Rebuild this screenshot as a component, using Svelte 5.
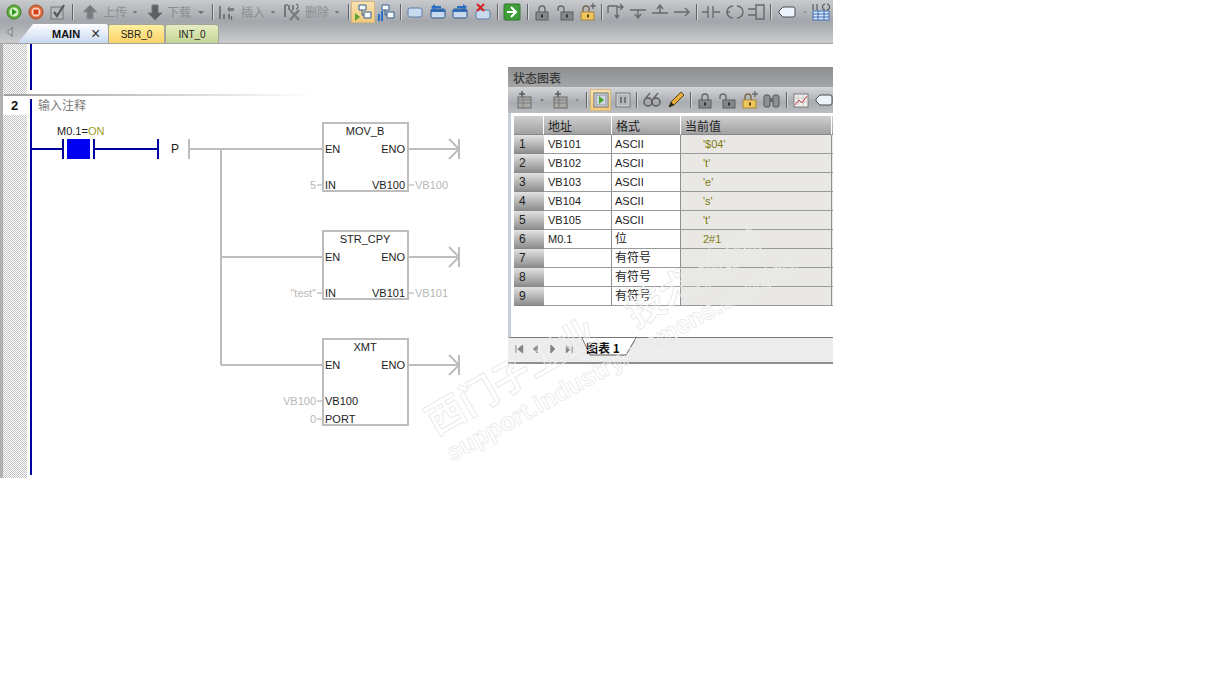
<script>
  const mainBar = [
    { w: 3 }, { i: 'play', w: 22 }, { i: 'stop', w: 22 }, { i: 'check', w: 22 }, { sep: 1, w: 6 }, { w: 2 },
    { i: 'up', w: 26 }, { t: '上传', w: 24 }, { i: 'drop', w: 16 }, { i: 'down', w: 24 }, { t: '下载', w: 24 }, { i: 'drop', w: 20 }, { sep: 1, w: 2 },
    { i: 'ins', w: 28 }, { t: '插入', w: 24 }, { i: 'drop', w: 16 }, { i: 'del', w: 24 }, { t: '删除', w: 24 }, { i: 'drop', w: 16 }, { sep: 1, w: 6 },
    { i: 'net', w: 24, on: 1 }, { i: 'net2', w: 22 }, { sep: 1, w: 6 },
    { i: 'bm', w: 24 }, { i: 'left', w: 22 }, { i: 'right', w: 22 }, { i: 'xbm', w: 22 }, { sep: 1, w: 8 },
    { i: 'go', w: 22 }, { sep: 1, w: 8 },
    { i: 'lock', w: 22 }, { i: 'unlock', w: 23 }, { i: 'lockadd', w: 23 }, { sep: 1, w: 5 },
    { i: 'br1', w: 22 }, { i: 'br2', w: 23 }, { i: 'br3', w: 22 }, { i: 'br4', w: 21 }, { sep: 1, w: 8 },
    { i: 'nc', w: 22 }, { i: 'coil', w: 25 }, { i: 'box', w: 20 }, { sep: 1, w: 7 },
    { i: 'tag', w: 26 }, { i: 'drop', w: 10 }, { i: 'tbl', w: 22 }
  ];
  const winBar = [
    { w: 5 }, { i: 'ins2', w: 22 }, { i: 'drop', w: 14 }, { i: 'ins3', w: 22 }, { i: 'drop', w: 12 }, { sep: 1, w: 7 },
    { i: 'run', w: 21, on: 1 }, { i: 'pause', w: 23 }, { sep: 1, w: 4 }, { i: 'glass', w: 28 }, { i: 'pencil', w: 20 }, { sep: 1, w: 8 },
    { i: 'lock', w: 21 }, { i: 'unlock', w: 23 }, { i: 'lockadd', w: 23 }, { i: 'bino', w: 21 }, { sep: 1, w: 8 }, { i: 'chart', w: 21 }, { i: 'tag', w: 26 }
  ];
  const rows = [
    ['1', 'VB101', 'ASCII', "'$04'"], ['2', 'VB102', 'ASCII', "'t'"], ['3', 'VB103', 'ASCII', "'e'"],
    ['4', 'VB104', 'ASCII', "'s'"], ['5', 'VB105', 'ASCII', "'t'"], ['6', 'M0.1', '位', '2#1'],
    ['7', '', '有符号', ''], ['8', '', '有符号', ''], ['9', '', '有符号', '']
  ];
  const blocks = [
    { y: 123, h: 68, title: 'MOV_B', pins: [{ name: 'IN', val: '5', dy: 62 }], out: 'VB100' },
    { y: 231, h: 68, title: 'STR_CPY', pins: [{ name: 'IN', val: '"test"', dy: 62 }], out: 'VB101' },
    { y: 339, h: 86, title: 'XMT', pins: [{ name: 'VB100', val: 'VB100', dy: 62 }, { name: 'PORT', val: '0', dy: 80 }] }
  ];
</script>

{#snippet icon(n)}
  <svg width="20" height="20" viewBox="0 0 20 20">
    {#if n === 'play'}
      <circle cx="10" cy="10" r="7" fill="#5fae3c" stroke="#3f7f2c" /><circle cx="10" cy="10" r="4.5" fill="#d8f0c8" /><path d="M8 6.5l5 3.5-5 3.5z" fill="#2f9a2a" />
    {:else if n === 'stop'}
      <circle cx="10" cy="10" r="7" fill="#dd6a3a" stroke="#a94a2a" /><circle cx="10" cy="10" r="4.5" fill="#f6d8c8" /><rect x="7.5" y="7.5" width="5" height="5" fill="#d8401c" />
    {:else if n === 'check'}
      <rect x="3" y="5" width="12" height="12" fill="#b6b8ba" stroke="#73767a" /><path d="M6 10l3 4 7-11" fill="none" stroke="#55585c" stroke-width="2.2" />
    {:else if n === 'up'}
      <path d="M10 3l7 7h-4v7H7v-7H3z" fill="#777b7f" stroke="#8d9094" />
    {:else if n === 'down'}
      <path d="M10 18l7-7h-4V3H7v8H3z" fill="#5c6064" stroke="#777" />
    {:else if n === 'drop'}
      <path d="M7 9h6l-3 3z" fill="#6d7074" />
    {:else if n === 'ins'}
      <path d="M3 4v13M7 12v5M12 12v5" stroke="#4a4d50" stroke-width="1.2" fill="none" /><path d="M10 7l3-3v2h4v3h-4v2z" fill="#7a7d81" /><path d="M14 14a2 2.5 0 0 1 0 4" stroke="#555" fill="none" />
    {:else if n === 'del'}
      <path d="M2 3v12M2 3h3M6 3v5M10 3v5" stroke="#4a4d50" stroke-width="1.2" fill="none" /><path d="M7 8l9 10M16 8l-9 10" stroke="#777b7f" stroke-width="2.4" /><path d="M13 2a2 2.5 0 0 1 0 5" stroke="#555" fill="none" />
    {:else if n === 'net' || n === 'net2'}
      <path d="M6 3h7v5H6zM11 10h7v6h-7z" fill="#f4f7fb" stroke="#36608f" /><path d="M9 8v5h2" fill="none" stroke="#36608f" />
      {#if n === 'net'}<path d="M2 11l5 4-5 4z" fill="#5aa62f" />{:else}<path d="M2 12h2v7H2zM5 9h2v10H5z" fill="#2a6fc4" />{/if}
    {:else if n === 'bm'}
      <rect x="3" y="6" width="14" height="9" rx="2" fill="#c9d9ee" stroke="#5b7fa8" />
    {:else if n === 'left' || n === 'right'}
      <rect x="3" y="7" width="14" height="9" rx="1.5" fill="#c9d9ee" stroke="#27548c" /><rect x="3" y="7" width="14" height="3" fill="#2f6cb3" />
      {#if n === 'left'}<path d="M3 5l4-3v2h6v2H7v2z" fill="#2a6fc4" />{:else}<path d="M17 5l-4-3v2H7v2h6v2z" fill="#2a6fc4" />{/if}
    {:else if n === 'xbm'}
      <rect x="4" y="8" width="14" height="9" rx="2" fill="#c9d9ee" stroke="#5b7fa8" /><path d="M5 2l7 7M12 2L5 9" stroke="#d92020" stroke-width="2" />
    {:else if n === 'go'}
      <rect x="2" y="2" width="16" height="16" rx="1" fill="#3f9e3a" stroke="#2f7a2c" /><path d="M5 10h7M9 5l5 5-5 5" fill="none" stroke="#fff" stroke-width="2" />
    {:else if n === 'lock'}
      <path d="M7 10V7a3 3 0 0 1 6 0v3" fill="none" stroke="#66696c" stroke-width="1.4" /><rect x="4" y="10" width="12" height="8" fill="#85878a" stroke="#5d6063" /><rect x="9" y="12.5" width="2" height="3" fill="#333" />
    {:else if n === 'unlock'}
      <path d="M3 9V7a3 3 0 0 1 6 0v3" fill="none" stroke="#66696c" stroke-width="1.4" /><rect x="6" y="10" width="12" height="8" fill="#85878a" stroke="#5d6063" /><rect x="11" y="12.5" width="2" height="3" fill="#333" />
    {:else if n === 'lockadd'}
      <path d="M5 10V7a3 3 0 0 1 6 0v3" fill="none" stroke="#77654a" stroke-width="1.4" /><rect x="3" y="10" width="13" height="8" fill="#eec65c" stroke="#a8853c" /><rect x="9" y="12.5" width="2" height="3" fill="#5a4410" /><path d="M15 1v6M12 4h6" stroke="#4a4d50" />
    {:else if n === 'br1'}
      <path d="M3 4h9v12M3 4v7M12 5h6M15 2l3 3-3 3M10 13l2 3 2-3" fill="none" stroke="#66696d" stroke-width="1.4" />
    {:else if n === 'br2'}
      <path d="M2 8h16M10 8v6M7 12l3 4 3-4" fill="none" stroke="#66696d" stroke-width="1.4" />
    {:else if n === 'br3'}
      <path d="M2 11h16M10 11V5M7 7l3-4 3 4" fill="none" stroke="#66696d" stroke-width="1.4" />
    {:else if n === 'br4'}
      <path d="M2 10h15M13 6l4 4-4 4" fill="none" stroke="#66696d" stroke-width="1.4" />
    {:else if n === 'nc'}
      <path d="M1 10h6M13 10h6M7 4v12M12 4v12" fill="none" stroke="#66696d" stroke-width="1.4" />
    {:else if n === 'coil'}
      <path d="M1 10h4M8 4a6 6 0 0 0 0 12M12 4a6 6 0 0 1 0 12" fill="none" stroke="#66696d" stroke-width="1.4" />
    {:else if n === 'box'}
      <path d="M1 7h8M1 13h8M9 3h8v14H9z" fill="none" stroke="#66696d" stroke-width="1.4" />
    {:else if n === 'tag'}
      <path d="M6 5h10a2 2 0 0 1 2 2v6a2 2 0 0 1-2 2H6l-4-4V9z" fill="#eef4fb" stroke="#4b4f53" />
    {:else if n === 'tbl'}
      <path d="M2 2v6M6 2v6M14 2a2.5 3 0 0 0 0 6M16 2a2.5 3 0 0 1 0 6" stroke="#444" fill="none" /><rect x="2" y="9" width="16" height="9" fill="#dbe7f8" stroke="#3f6fb6" /><path d="M2 12h16M2 15h16M7 9v9M13 9v9" stroke="#3f6fb6" />
    {:else if n === 'ins2' || n === 'ins3'}
      <rect x="4" y="7" width="13" height="11" fill="#a9aaa4" stroke="#6a6d6f" /><path d="M4 10h13M4 13h13M9 7v11" stroke="#7a7d7f" /><path d="M8 1v6M5 4h6" stroke="#5a5d5f" stroke-width="1.6" />
    {:else if n === 'run'}
      <rect x="3" y="3" width="14" height="14" fill="#e8e9ea" stroke="#66696d" /><rect x="5" y="5" width="10" height="10" fill="#cfd9e4" stroke="#8b9099" /><path d="M8 6l5 4-5 4z" fill="#4ba32e" />
    {:else if n === 'pause'}
      <rect x="3" y="3" width="14" height="14" fill="#c9cacb" stroke="#77797c" /><rect x="5" y="5" width="10" height="10" fill="#b4b5b7" /><path d="M8 7v6M12 7v6" stroke="#66696d" stroke-width="1.6" />
    {:else if n === 'glass'}
      <circle cx="6" cy="12" r="4" fill="#aaa" stroke="#55585a" stroke-width="1.4" /><circle cx="14" cy="12" r="4" fill="#aaa" stroke="#55585a" stroke-width="1.4" /><path d="M3 9L8 3M11 9l5-6" stroke="#66696d" stroke-width="1.4" />
    {:else if n === 'pencil'}
      <path d="M3 17l2-5L15 2l3 3L8 15z" fill="#e7ac3a" stroke="#5c4a1f" /><path d="M3 17l2-5 3 3z" fill="#222" />
    {:else if n === 'bino'}
      <rect x="2" y="5" width="6" height="12" rx="2" fill="#8c8e90" stroke="#55585a" /><rect x="11" y="5" width="6" height="12" rx="2" fill="#8c8e90" stroke="#55585a" /><rect x="8" y="8" width="3" height="4" fill="#666" />
    {:else if n === 'chart'}
      <rect x="3" y="4" width="14" height="13" fill="#f4f0ee" stroke="#77797c" /><path d="M3 8h14M3 12h14M7 4v13M12 4v13" stroke="#c8c8c8" /><path d="M4 15l4-5 3 3 5-7" fill="none" stroke="#c8404a" />
    {/if}
  </svg>
{/snippet}

{#snippet bar(items)}
  {#each items as it}
    {#if it.sep}
      <span class="sepwrap" style="width:{it.w}px"><span class="sep"></span></span>
    {:else if it.t}
      <span class="lbl" style="width:{it.w}px">{it.t}</span>
    {:else}
      <span class="btn" class:on={it.on} style="width:{it.w}px">{#if it.i}{@render icon(it.i)}{/if}</span>
    {/if}
  {/each}
{/snippet}

<div class="app">
  <div class="chrome">
    <div class="toolbar">{@render bar(mainBar)}</div>
    <div class="tabs">
      <svg class="scroll" width="10" height="12" viewBox="0 0 10 12"><path d="M7 1.5L2.5 6 7 10.5z" fill="#c9cbce" stroke="#6f7276" /></svg>
      <div class="tab main"><b>MAIN</b><span class="x">×</span></div>
      <div class="tab sbr">SBR_0</div>
      <div class="tab int">INT_0</div>
    </div>
  </div>

  <div class="editor">
    <svg class="ladder" width="833" height="434" viewBox="0 44 833 434">
      <defs>
        <pattern id="hatch" width="2" height="2" patternUnits="userSpaceOnUse">
          <rect width="2" height="2" fill="#fff" /><rect width="1" height="1" fill="#c4c4c4" /><rect x="1" y="1" width="1" height="1" fill="#c4c4c4" />
        </pattern>
        <linearGradient id="fade"><stop offset="0" stop-color="#a0a0a0" /><stop offset="1" stop-color="#fff" /></linearGradient>
      </defs>
      <rect x="3" y="44" width="24" height="434" fill="url(#hatch)" />
      <rect x="0" y="44" width="3" height="434" fill="#b0b0b0" />
      <rect x="4" y="94" width="310" height="2" fill="url(#fade)" />
      <rect x="3" y="96" width="24" height="19" fill="#fff" />
      <text x="11" y="110" class="num">2</text>
      <text x="38" y="110" class="cmt">输入注释</text>
      <rect x="30" y="44" width="2" height="46" fill="#00009c" />
      <rect x="30" y="99" width="2" height="376" fill="#00009c" />

      <text x="57" y="135" class="t">M0.1=<tspan class="on">ON</tspan></text>
      <path d="M32 149H62M94 149H158" class="bw" />
      <path d="M63 139v20M94 139v20M158 139v20" class="bw" />
      <rect x="67" y="139" width="23" height="20" fill="#0000f0" />
      <text x="171" y="153" class="t big">P</text>
      <path d="M189 139v20M190 149H322M221 149V365M221 257H322M221 365H322" class="gw" />

      {#each blocks as b}
        <rect x="323" y={b.y} width="85" height={b.h} class="blk" />
        <text x="365" y={b.y + 12} class="t mid">{b.title}</text>
        <text x="325" y={b.y + 30} class="t">EN</text>
        <text x="405" y={b.y + 30} class="t end">ENO</text>
        <path d="M409 {b.y + 26}H459M459 {b.y + 16}v20M449 {b.y + 16}l10 10-10 10" class="gw" />
        {#each b.pins as p}
          <text x="325" y={b.y + p.dy + 4} class="t">{p.name}</text>
          <text x="316" y={b.y + p.dy + 4} class="t dim end">{p.val}</text>
          <path d="M317 {b.y + p.dy}H322" class="stub" />
        {/each}
        {#if b.out}
          <text x="405" y={b.y + 66} class="t end">{b.out}</text>
          <path d="M409 {b.y + 62}H414" class="stub" />
          <text x="415" y={b.y + 66} class="t dim">{b.out}</text>
        {/if}
      {/each}
    </svg>

    <section class="win">
      <header>状态图表</header>
      <div class="winbar">{@render bar(winBar)}</div>
      <div class="body">
        <div class="grid">
          <div class="hd"></div><div class="hd">地址</div><div class="hd">格式</div><div class="hd">当前值</div><div class="hd"></div>
          {#each rows as r, i}
            <div class="rn">{r[0]}</div><div class="c">{r[1]}</div><div class="c fmt" class:cjk={i >= 5}>{r[2]}</div><div class="c val">{r[3]}</div><div class="c val"></div>
          {/each}
        </div>
      </div>
      <div class="sheet">
        <span class="nav">
          <svg width="66" height="10" viewBox="0 0 66 10">
            <path d="M2 1v8M9 1L4 5l5 4zM24 1l-4 4 4 4zM38 1l4 4-4 4zM54 1l4 4-4 4zM60 1v8" fill="#7f8285" stroke="#7f8285" />
          </svg>
        </span>
        <span class="sheettab">
          <svg class="tabedge" width="58" height="20" viewBox="0 0 58 20"><path d="M0 0L8 17H44L54 0" fill="#fff" stroke="#555" /></svg>
          <span class="tabtxt">图表 1</span>
        </span>
      </div>
    </section>

    <svg class="mark" width="833" height="434" viewBox="0 44 833 434">
      <text transform="translate(436 436) rotate(-30)" class="wm1">西门子工业</text>
      <text transform="translate(636 328) rotate(-30)" class="wm1">技术论坛</text>
      <text transform="translate(452 462) rotate(-29)" class="wm2">support.industry.siemens.com/cs</text>
    </svg>
  </div>
</div>

<style>
  :global(body) { margin: 0; background: #fff; }
  .app { width: 833px; font: 11px "Liberation Sans", "Noto Sans CJK SC", sans-serif; color: #222; }
  .chrome { height: 44px; background: linear-gradient(#c8cacc 0, #a3a7ac 21px, #a9adb1 26px, #c9cacc 42px); border-bottom: 1px solid #a2a2a2; box-sizing: border-box; }
  .toolbar { height: 23px; display: flex; align-items: center; overflow: hidden; }
  .btn { display: flex; justify-content: center; align-items: center; height: 22px; flex: none; }
  .btn.on { background: linear-gradient(#f7e3b4, #f2c878); outline: 1px solid #d8b77a; outline-offset: -1px; }
  .sepwrap { display: flex; justify-content: center; flex: none; }
  .sep { width: 1px; height: 16px; flex: none; background: #5f6367; box-shadow: 1px 0 #d8d8d8; }
  .lbl { flex: none; font-size: 12px; color: #8b8e91; white-space: nowrap; }
  .tabs { height: 20px; display: flex; align-items: flex-end; position: relative; }
  .scroll { margin: 0 0 5px 5px; flex: none; }
  .tab { height: 19px; display: flex; align-items: center; justify-content: center; box-sizing: border-box; font-size: 10px; color: #222; border: 1px solid #a5a69a; border-bottom: none; flex: none; border-radius: 3px 3px 0 0; }
  .main { width: 90px; margin-left: 3px; padding-left: 34px; justify-content: flex-start; gap: 11px; border: none; background: linear-gradient(#fdfeff, #c9d9f0); clip-path: polygon(15px 0, 100% 0, 100% 100%, 0 100%); font-size: 11px; color: #111; }
  .x { font-size: 16px; color: #333; line-height: 1; }
  .sbr { width: 57px; background: linear-gradient(#fff0a0, #fbd268); }
  .int { width: 54px; background: linear-gradient(#e6edc0, #c3d596); }

  .editor { position: relative; height: 434px; }
  .ladder, .mark { display: block; }
  .mark { position: absolute; left: 0; top: 0; pointer-events: none; }
  .wm1 { font: 700 38px "Noto Sans CJK SC", sans-serif; fill: rgba(255,255,255,.15); stroke: #e8e8e8; stroke-width: .8; }
  .wm2 { font: 700 25px "Liberation Sans", sans-serif; fill: rgba(255,255,255,.15); stroke: #e8e8e8; stroke-width: .7; }

  .t { font: 11px "Liberation Sans", sans-serif; fill: #1c1c1c; }
  .big { font-size: 12px; }
  .mid { text-anchor: middle; }
  .end { text-anchor: end; }
  .dim { fill: #b8b8b8; }
  .on { fill: #a09a20; }
  .num { font: 700 13px "Liberation Sans", sans-serif; fill: #111; }
  .cmt { font: 12px "Noto Sans CJK SC", sans-serif; fill: #7c7c7c; }
  .bw { stroke: #00009c; stroke-width: 2; fill: none; }
  .gw { stroke: #bdbdbd; stroke-width: 2; fill: none; }
  .stub { stroke: #a8a8a8; stroke-width: 1; fill: none; }
  .blk { fill: #fff; stroke: #bdbdbd; stroke-width: 2; }

  .win { position: absolute; left: 508px; top: 23px; width: 325px; height: 297px; overflow: hidden; display: flex; flex-direction: column; background: #fff; border-bottom: 2px solid #8f8f8f; box-sizing: border-box; }
  .win header { height: 20px; flex: none; background: linear-gradient(#8d8f91, #a3a5a7); padding: 2px 0 0 5px; box-sizing: border-box; font: 500 12px "Noto Sans CJK SC", sans-serif; color: #3a3a3a; line-height: 17px; }
  .winbar { height: 26px; flex: none; display: flex; align-items: center; background: linear-gradient(#d4d5d7, #a9acb0 60%, #bcbec1); }
  .body { flex: 1; padding: 3px 0 0 5px; background: #fff; border-left: 3px solid #c5d0dc; border-bottom: 1px solid #777; min-height: 0; }
  .grid { display: grid; grid-template-columns: 30px 68px 69px 151px 20px; grid-template-rows: repeat(10, 19px); margin-left: -2px; }
  .hd { background: linear-gradient(#cfcfcf, #a2a2a2); border-right: 1px solid #fff; font: 12px "Noto Sans CJK SC", sans-serif; padding-left: 4px; line-height: 19px; color: #222; border-bottom: 1px solid #888; box-sizing: border-box; }
  .rn { background: linear-gradient(#e2e2e2, #8e8e8e); padding-left: 5px; font-size: 12px; line-height: 19px; color: #222; border-bottom: 1px solid #888; box-sizing: border-box; }
  .c { border-right: 1px solid #8f8f8f; border-bottom: 1px solid #9a9a9a; box-sizing: border-box; padding-left: 4px; font: 11px/18px "Liberation Sans", "Noto Sans CJK SC", sans-serif; color: #222; }
  .fmt { padding-left: 3px; }
  .cjk { font-size: 12px; }
  .val { background: #e9e8e4; padding-left: 22px; color: #7e7a10; }
  .sheet { height: 24px; flex: none; background: #ededed; display: flex; align-items: flex-start; padding-left: 6px; gap: 4px; }
  .nav { display: flex; width: 64px; flex: none; margin-top: 6px; }
  .sheettab { position: relative; width: 58px; height: 20px; flex: none; }
  .tabedge { position: absolute; left: 0; top: 0; }
  .tabtxt { position: absolute; left: 4px; top: 1px; font: 700 12px/18px "Noto Sans CJK SC", sans-serif; color: #111; white-space: nowrap; }
</style>
